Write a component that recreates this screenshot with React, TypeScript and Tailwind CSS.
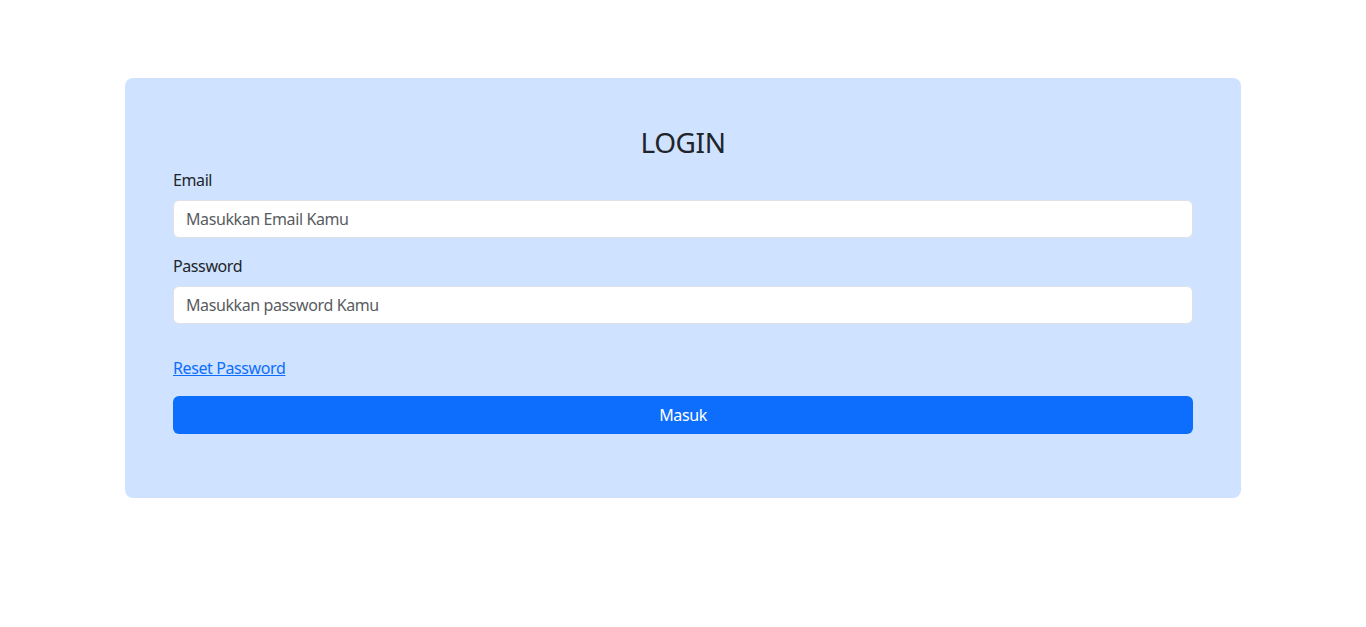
export default function App() {
  return (
    <div
      className="min-h-[627px] bg-white text-[#212529] tracking-[-0.025em]"
      style={{ fontFamily: '"Noto Sans", "Open Sans", sans-serif' }}
    >
      <div className="mx-auto w-[1140px] px-3 pt-[78px]">
        <div className="rounded-lg bg-[#cfe2ff] px-12 pt-12 pb-16">
          <h3 className="mb-2 text-center text-[28px] leading-[1.2] font-normal">LOGIN</h3>
          <form onSubmit={(e) => e.preventDefault()}>
            <div className="mb-4">
              <label className="mb-2 block text-base leading-6">Email</label>
              <input
                type="email"
                placeholder="Masukkan Email Kamu"
                className="block h-[38px] w-full rounded-md border border-[#dee2e6] bg-white px-3 py-1.5 text-base leading-6 tracking-[-0.025em] text-[#212529] outline-none placeholder:text-[#595c5f]"
              />
            </div>
            <div>
              <label className="mb-2 block text-base leading-6">Password</label>
              <input
                type="password"
                placeholder="Masukkan password Kamu"
                className="block h-[38px] w-full rounded-md border border-[#dee2e6] bg-white px-3 py-1.5 text-base leading-6 tracking-[-0.025em] text-[#212529] outline-none placeholder:text-[#595c5f]"
              />
            </div>
            <div className="mt-8 mb-4 text-base leading-6">
              <a href="#" className="text-[#0d6efd] underline">
                Reset Password
              </a>
            </div>
            <button
              type="submit"
              className="block h-[38px] w-full rounded-md bg-[#0d6efd] text-base leading-6 tracking-[-0.025em] text-white"
            >
              Masuk
            </button>
          </form>
        </div>
      </div>
    </div>
  );
}
